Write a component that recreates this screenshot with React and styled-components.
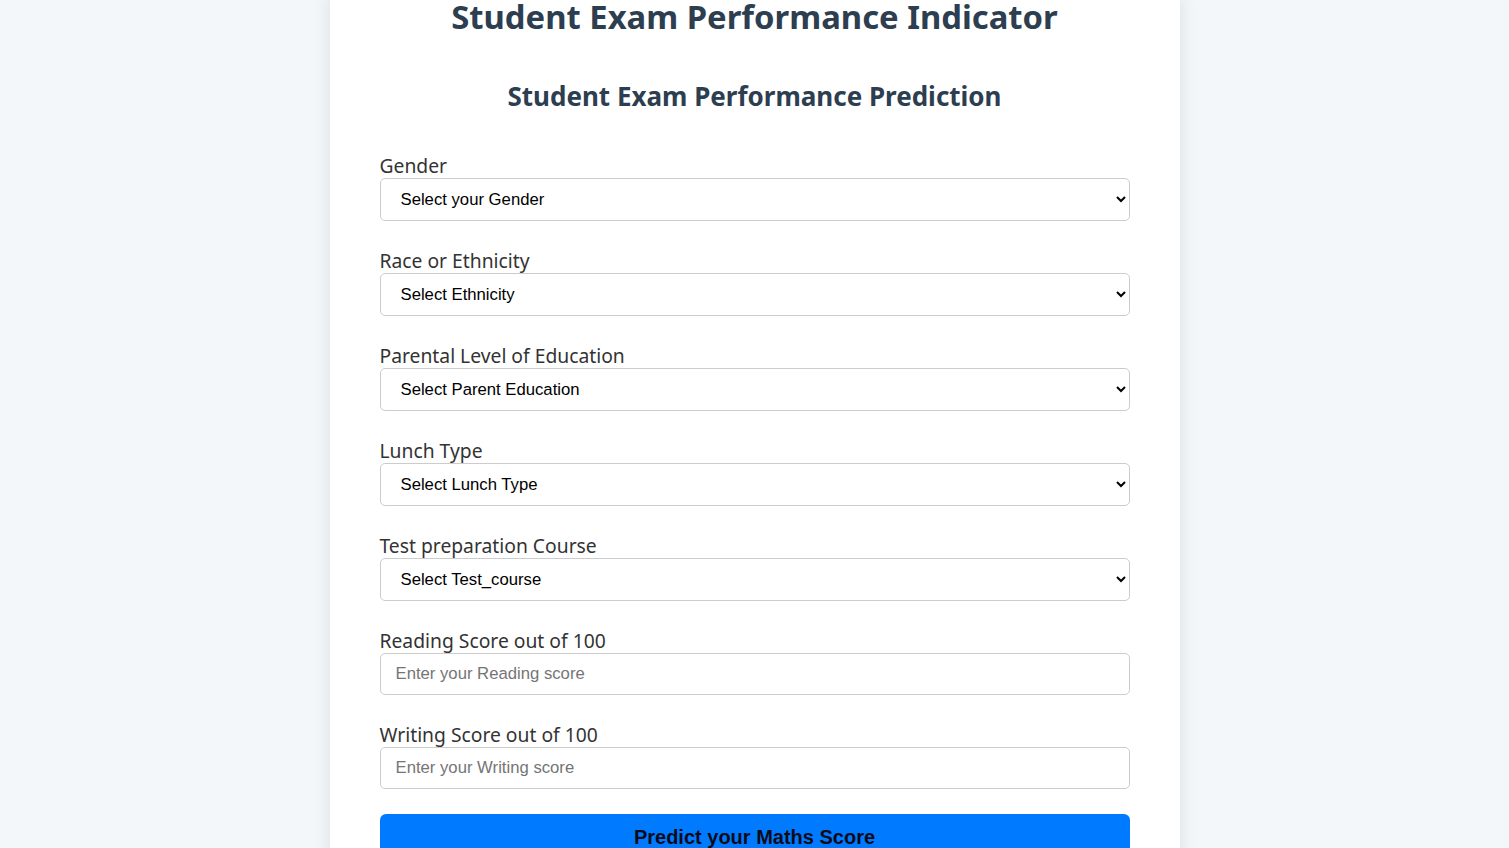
import styled, { createGlobalStyle } from 'styled-components'

const GlobalStyle = createGlobalStyle`
  html, body {
    margin: 0;
    padding: 0;
    background-color: #f4f7fa;
    overflow: hidden;
  }
  * {
    box-sizing: border-box;
  }
`

const Page = styled.div`
  display: flex;
  justify-content: center;
  min-height: 848px;
`

const Card = styled.div`
  width: 850px;
  margin-top: -5px;
  padding: 0 50px 40px;
  background-color: #fff;
  box-shadow: 0 0 18px rgba(0, 0, 0, 0.1);
  display: flex;
  flex-direction: column;
`

const Title = styled.h1`
  margin: 0;
  font-family: 'Noto Sans', sans-serif;
  font-size: 32.8px;
  line-height: 44px;
  font-weight: 700;
  color: #2c3e50;
  text-align: center;
`

const Subtitle = styled.h2`
  margin: 41px 0 42px;
  font-family: 'Noto Sans', sans-serif;
  font-size: 26px;
  line-height: 32px;
  font-weight: 700;
  color: #2c3e50;
  text-align: center;
`

const Form = styled.form`
  display: flex;
  flex-direction: column;
`

const Group = styled.div`
  display: flex;
  flex-direction: column;
  margin-bottom: ${(p) => p.$gap || 28}px;
`

const Label = styled.label`
  font-family: 'Noto Sans', sans-serif;
  font-size: 19.3px;
  line-height: 24px;
  color: #333;
`

const Select = styled.select`
  width: 100%;
  height: 43px;
  padding: 0 15px 0 16px;
  font-family: 'Liberation Sans', Arial, sans-serif;
  font-size: 16.7px;
  color: #000;
  background-color: #fff;
  border: 1px solid #ccc;
  border-radius: 5px;
`

const Input = styled.input`
  width: 100%;
  height: 42px;
  padding: 0 15px;
  font-family: 'Liberation Sans', Arial, sans-serif;
  font-size: 16.7px;
  color: #000;
  border: 1px solid #ccc;
  border-radius: 5px;

  &::placeholder {
    color: #757575;
  }
`

const Button = styled.button`
  width: 100%;
  height: 46px;
  border: none;
  border-radius: 6px;
  background-color: #007bff;
  color: #0b0b1a;
  font-family: 'Liberation Sans', Arial, sans-serif;
  font-size: 20px;
  font-weight: 700;
  padding-top: 1px;
`

const selects = [
  { label: 'Gender', text: 'Select your Gender' },
  { label: 'Race or Ethnicity', text: 'Select Ethnicity' },
  { label: 'Parental Level of Education', text: 'Select Parent Education' },
  { label: 'Lunch Type', text: 'Select Lunch Type' },
  { label: 'Test preparation Course', text: 'Select Test_course' },
]

const App = () => {
  return (
    <>
      <GlobalStyle />
      <Page>
        <Card>
          <Title>Student Exam Performance Indicator</Title>
          <Subtitle>Student Exam Performance Prediction</Subtitle>
          <Form onSubmit={(e) => e.preventDefault()}>
            {selects.map((s) => (
              <Group key={s.label}>
                <Label>{s.label}</Label>
                <Select defaultValue=''>
                  <option value='' disabled>
                    {s.text}
                  </option>
                </Select>
              </Group>
            ))}
            <Group>
              <Label>Reading Score out of 100</Label>
              <Input type='number' placeholder='Enter your Reading score' />
            </Group>
            <Group $gap={25}>
              <Label>Writing Score out of 100</Label>
              <Input type='number' placeholder='Enter your Writing score' />
            </Group>
            <Button type='submit'>Predict your Maths Score</Button>
          </Form>
        </Card>
      </Page>
    </>
  )
}

export default App
